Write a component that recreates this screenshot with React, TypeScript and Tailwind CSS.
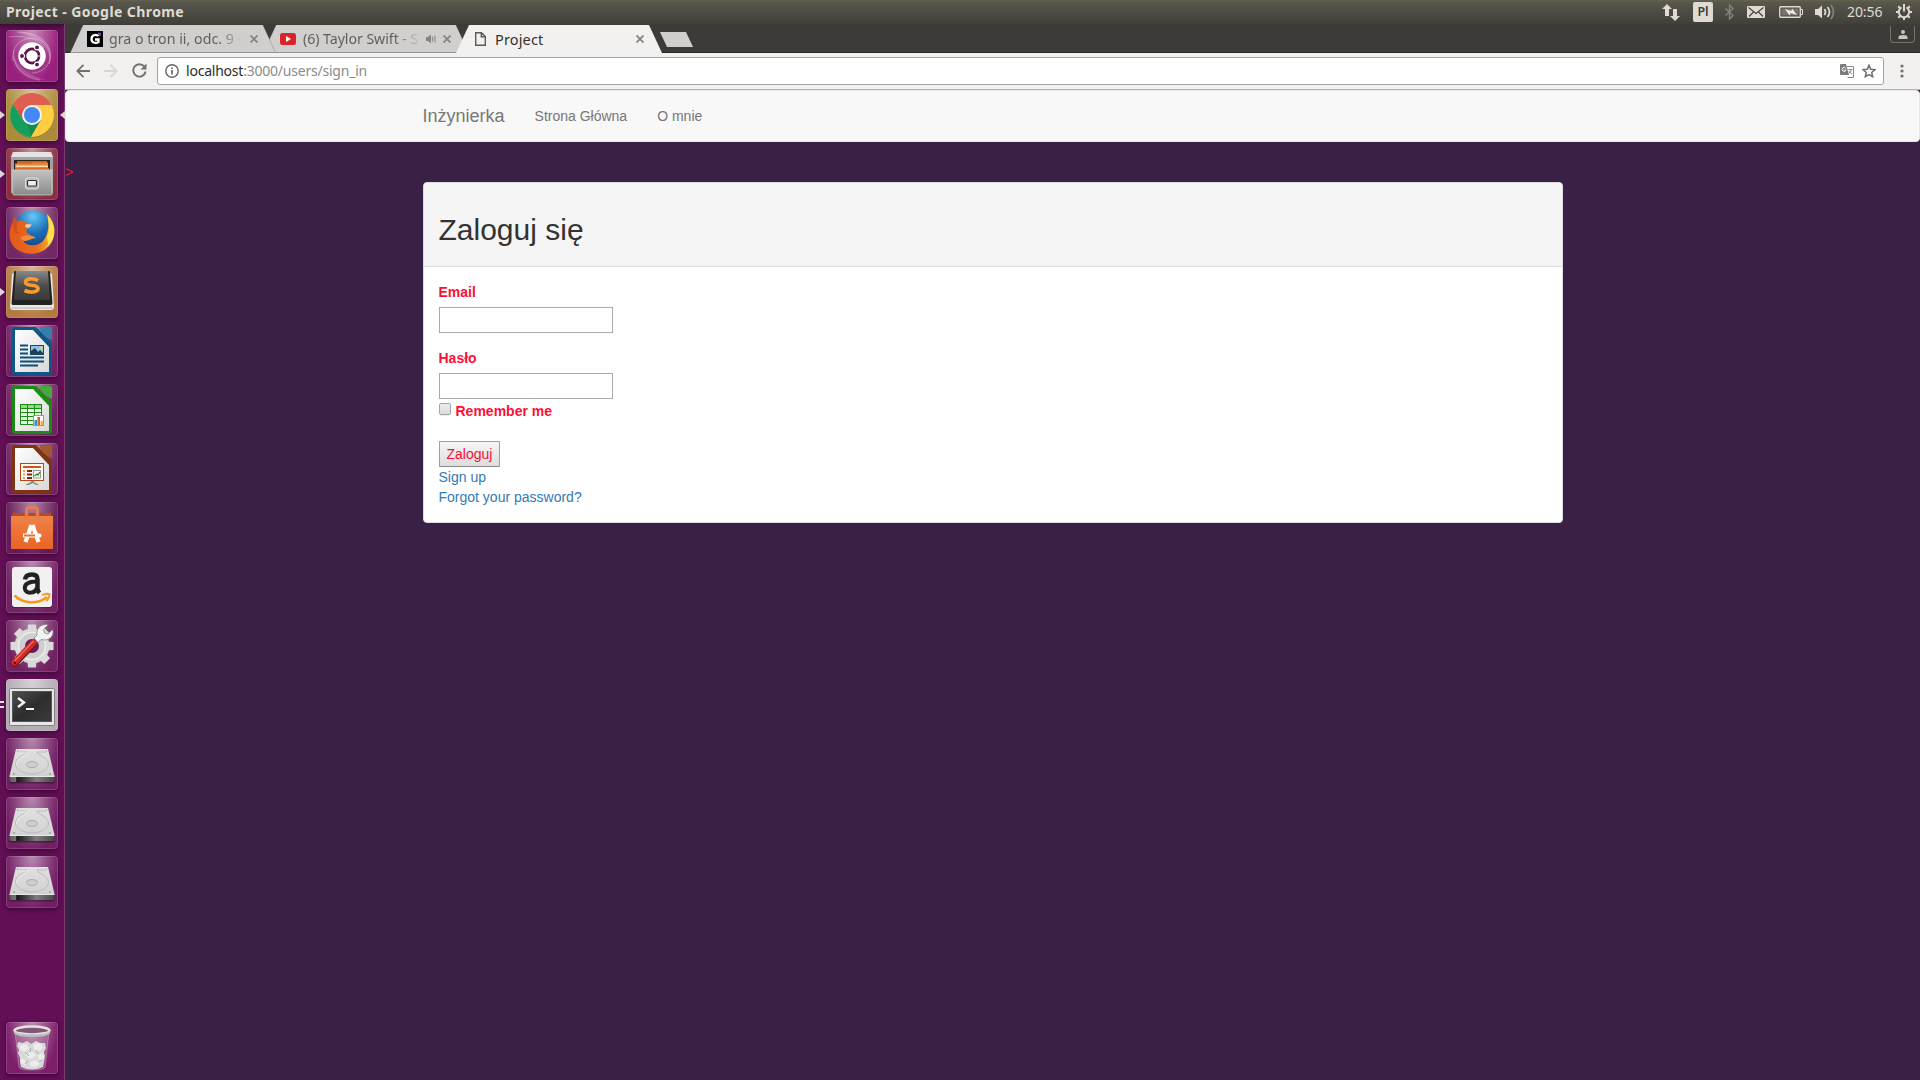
import React, { useId } from "react";

const UI = "font-['Noto_Sans',sans-serif]";

/* ---------- Launcher ---------- */

type TileProps = {
  base: string;
  children: React.ReactNode;
  running?: "one" | "two";
  focused?: boolean;
};

function Tile({ base, children, running, focused }: TileProps) {
  return (
    <div className="relative flex h-[52px] w-full shrink-0 items-center justify-center">
      {running === "one" && (
        <svg className="absolute left-0 top-[22px]" width="6" height="8" viewBox="0 0 6 8">
          <path d="M0 0L5 4L0 8Z" fill="#d9d5da" />
        </svg>
      )}
      {running === "two" && (
        <svg className="absolute left-0 top-[21px]" width="5" height="9" viewBox="0 0 5 9">
          <path d="M0 1h4v2H0zM0 6h4v2H0z" fill="#e6e2e6" />
        </svg>
      )}
      {focused && (
        <svg className="absolute -right-[0.5px] top-[22px]" width="6" height="8" viewBox="0 0 6 8">
          <path d="M6 0L1 4L6 8Z" fill="#d9d5da" />
        </svg>
      )}
      <div className={`h-[52px] w-[52px] overflow-hidden rounded-[4px] shadow-[0_2px_4px_rgba(20,0,25,0.45)] ${base}`}>
        <div className="h-full w-full rounded-[4px] bg-[radial-gradient(ellipse_at_50%_-5%,rgba(255,255,255,0.5)_0%,rgba(255,255,255,0.22)_40%,rgba(255,255,255,0)_75%)] shadow-[inset_0_0_0_1px_rgba(255,255,255,0.14)]">
          <svg width="52" height="52" viewBox="0 0 52 52">
            {children}
          </svg>
        </div>
      </div>
    </div>
  );
}

function UbuntuIcon() {
  return (
    <>
      <g fill="none" stroke="#fff" strokeOpacity=".3" strokeWidth="1">
        <path d="M7 31C5 13 19 6 31 9C43 12 46 25 43 34" />
        <path d="M11 2C33 2 47 13 44 29C42 38 34 43 26 43" />
        <path d="M8 20C6 36 17 48 34 50" />
        <path d="M3 7C17 5 35 9 38 18" />
      </g>
      <path d="M11 2C34 1 49 16 43 33C45 18 34 8 11 2Z" fill="#fff" fillOpacity=".18" />
      <path d="M7 24C6 39 20 50 40 50C24 46 12 38 7 24Z" fill="#fff" fillOpacity=".16" />
      <circle cx="26" cy="26.5" r="14" fill="#30002e" fillOpacity=".35" />
      <circle cx="26" cy="26" r="13.8" fill="#fff" />
      <circle cx="26" cy="26" r="7.1" fill="none" stroke="#5e1449" strokeWidth="2.600" />
      <g stroke="#fff" strokeWidth="1.100">
        <path d="M29.500 20L31.500 16.500M29.500 32L31.500 35.500M19 26H15" />
        <circle cx="16" cy="26" r="2.500" fill="#5e1449" />
        <circle cx="31" cy="17.400" r="2.500" fill="#5e1449" />
        <circle cx="31" cy="34.600" r="2.500" fill="#5e1449" />
      </g>
      <path d="M22 19L20.200 16M32 26H35" stroke="#fff" strokeWidth="0.800" />
    </>
  );
}

function ChromeIcon() {
  return (
    <>
      <circle cx="26" cy="26.800" r="22" fill="#4a3500" fillOpacity=".3" />
      <circle cx="26" cy="26" r="22" fill="#ffcd40" />
      <path d="M26 16H45.600A22 22 0 0 0 7 15L17.300 31Z" fill="#db4f43" />
      <path d="M26 16H45.600A22 22 0 0 0 34 5.500C20 3 12 8 7 15L12 22Z" fill="#e2685c" fillOpacity=".6" />
      <path d="M7 15A22 22 0 0 0 24.800 48L34.700 31L26 36L17.300 31Z" fill="#14a05c" />
      <path d="M24.800 48L34.700 31L26 36L20 34C22 38 25 42 24.800 48Z" fill="#0d7a44" fillOpacity=".5" />
      <circle cx="26" cy="26" r="10" fill="#f3f3f3" />
      <circle cx="26" cy="26" r="8" fill="#4688f1" />
    </>
  );
}

function FilesIcon() {
  const id = useId();
  return (
    <>
      <defs>
        <linearGradient id={id} x1="0" y1="0" x2="0" y2="1">
          <stop offset="0" stopColor="#c2c2c2" />
          <stop offset="1" stopColor="#8b8b8b" />
        </linearGradient>
      </defs>
      <path d="M7 4H45L47 9V45H5V9Z" fill="#a3a3a3" />
      <path d="M7 4H45L47 9H5Z" fill="#e3e3e3" />
      <path d="M8 12H44V24H8Z" fill="#2d2018" />
      <path d="M11 13H41V16H11Z" fill="#c9661d" />
      <path d="M9 15.500H25L26 14.500H42V24H9Z" fill="#e8833a" />
      <path d="M10 17.500H42V19H10Z" fill="#f8dcb8" />
      <path d="M9 20H43V24H9Z" fill="#dd6b22" />
      <path d="M6 22H46V46Q46 47 45 47H8Q7 47 7 46Z" fill={`url(#${id})`} stroke="#d4d4d4" strokeWidth=".7" />
      <rect x="19.500" y="30" width="13" height="11" rx="2" fill="#b6b6b6" stroke="#ddd" />
      <rect x="21.500" y="32.500" width="9" height="5.500" rx="1" fill="#eee" stroke="#333" strokeWidth="1.200" />
    </>
  );
}

function FirefoxIcon() {
  const a = useId();
  const b = useId();
  return (
    <>
      <defs>
        <radialGradient id={a} cx=".5" cy=".15" r=".9">
          <stop offset="0" stopColor="#65c8f4" />
          <stop offset=".45" stopColor="#1d6fb8" />
          <stop offset="1" stopColor="#152f6d" />
        </radialGradient>
        <linearGradient id={b} x1="0" y1="0" x2="1" y2="0">
          <stop offset="0" stopColor="#e25a1d" />
          <stop offset=".6" stopColor="#e96b1f" />
          <stop offset="1" stopColor="#fbc72f" />
        </linearGradient>
      </defs>
      <circle cx="27" cy="24" r="20.500" fill={`url(#${a})`} />
      <path d="M42 8C50 16 51 30 43 39C34 49 18 49 9 41C2 34 2 23 7 15L8 10L12 14C16 13 19 14 21 16L25 18C24 21 21 21 20 24C21 27 24 27 25 29C20 32 18 32 18 35C22 40 33 39 37 34C42 28 44 17 42 8Z" fill={`url(#${b})`} />
      <path d="M41 7C51 19 50 33 41 40C44 34 39 34 42 27C44 20 42 14 41 7Z" fill="#fde04a" />
      <path d="M8 10L12 14C10 20 10 24 13 27C8 27 6 20 8 10Z" fill="#c9431a" fillOpacity=".6" />
      <path d="M20 17L26 17.500L23 21L19 20Z" fill="#f5c9a0" />
      <path d="M14 31C19 27 26 28 30 31C25 31 24 34 18 34Z" fill="#f28a3a" />
    </>
  );
}

function SublimeIcon() {
  const id = useId();
  return (
    <>
      <defs>
        <linearGradient id={id} x1="0" y1="0" x2="0" y2="1">
          <stop offset="0" stopColor="#898989" />
          <stop offset=".5" stopColor="#4d4d4d" />
          <stop offset="1" stopColor="#383838" />
        </linearGradient>
      </defs>
      <path d="M6 9Q6 7 8 7H44Q46 7 46 9L48 41Q48 44 45 44H7Q4 44 4 41Z" fill="#e9e9e9" />
      <path d="M5 41H47V43H5Z" fill="#cdcdcd" />
      <path d="M8 6Q8 5 10 5H42Q44 5 44 6L46.500 37Q46.500 39 45 39H7Q5.500 39 5.500 37Z" fill="#222" />
      <path d="M10 5H42L44 33Q44 34 42 34H10Q8 34 8 33Z" fill={`url(#${id})`} />
      <path d="M32 14.500C27 11.500 19.500 12.500 19.500 16.500C19.500 21 32 17.500 32 22.500C32 26.500 24 27 18.500 24.500" fill="none" stroke="#f79a31" strokeWidth="3.600" />
    </>
  );
}

function DocShape({ edge, fold }: { edge: string; fold: string }) {
  const id = useId();
  return (
    <>
      <defs>
        <linearGradient id={id} x1="0" y1="0" x2="1" y2="1">
          <stop offset="0" stopColor="#fff" />
          <stop offset="1" stopColor="#d8d8d8" />
        </linearGradient>
      </defs>
      <path d="M8 2H30L46 18V47Q46 50 43 50H9Q6 50 6 47V5Q6 2 8 2Z" fill={edge} />
      <path d="M9 5H27L43 22V47H9Z" fill={`url(#${id})`} />
      <path d="M33.500 2H44Q46 2 46 4V14.500Q36 12 33.500 2Z" fill={fold} />
    </>
  );
}

function WriterIcon() {
  return (
    <>
      <DocShape edge="#0c5688" fold="#357fab" />
      <path d="M14 20.500h8M14 24.500h8M14 28.500h8M14 32.500h24M14 36.500h24M14 40.500h18" stroke="#0e4f7d" strokeWidth="2" />
      <rect x="24.500" y="20.500" width="13" height="9" fill="#8ac4ea" stroke="#17476b" />
      <path d="M25 29V26L29 23L32 27L34 25L37 28V29Z" fill="#253d49" />
      <circle cx="35.500" cy="23" r="1.500" fill="#f2cf52" />
    </>
  );
}

function CalcIcon() {
  return (
    <>
      <DocShape edge="#1a8a12" fold="#46a93c" />
      <rect x="14.500" y="20.500" width="21" height="20" fill="#e9f9e6" stroke="#1b8a12" />
      <path d="M15 21h20v3H15z" fill="#8fdc85" />
      <path d="M14 24.500h22M14 28.500h22M14 32.500h22M14 36.500h22M21.500 20v20M28.500 20v20" stroke="#1b8a12" />
      <rect x="27.500" y="31.500" width="10" height="10" fill="#fff" stroke="#999" />
      <path d="M28.500 36h2.500v5h-2.500z" fill="#2b8fd0" />
      <path d="M31.500 33h2.500v8h-2.500z" fill="#d8611d" />
      <path d="M34.500 37h2.500v4h-2.500z" fill="#efb52b" />
    </>
  );
}

function ImpressIcon() {
  return (
    <>
      <DocShape edge="#7e3412" fold="#a4572f" />
      <rect x="14.500" y="20.500" width="23" height="17" fill="#fff8f3" stroke="#b5490f" />
      <path d="M17 24h18" stroke="#c85a19" strokeWidth="2" />
      <path d="M17 28h2M17 31.500h2M17 35h2" stroke="#e89a6a" strokeWidth="2" />
      <path d="M21 28h5M21 31.500h5M21 35h5" stroke="#7a2d0a" strokeWidth="2" />
      <rect x="27.500" y="27.500" width="7" height="7.500" fill="#eefaea" stroke="#999" />
      <path d="M28.500 33L31 31L32 32L34 29" fill="none" stroke="#1f8a1a" strokeWidth="1.200" />
      <path d="M25 38h3v1l5 3h-3l-3-2l-4 2h-4l6-3z" fill="#888" />
    </>
  );
}

function SoftwareIcon() {
  const id = useId();
  return (
    <>
      <defs>
        <linearGradient id={id} x1="0" y1="0" x2="0" y2="1">
          <stop offset="0" stopColor="#ee8347" />
          <stop offset="1" stopColor="#ea6324" />
        </linearGradient>
      </defs>
      <path d="M7 10L10 11H43L45 10V16H6Z" fill="#b94a22" />
      <path d="M5 14H47V47H5Z" fill={`url(#${id})`} />
      <path d="M20.500 17.500V9Q20.500 5.500 24 5.500H28Q31.500 5.500 31.500 9V17.500" fill="none" stroke="#e87b50" strokeWidth="3.200" />
      <path d="M25.500 23L19.500 40M26.500 23L32.500 40" stroke="#fff" strokeWidth="4.200" />
      <path d="M17 31.500H33.500Q35.500 31.500 35.500 33.500Q35.500 35.500 33.500 35.500H17Z" fill="#fff" />
      <path d="M18 33.500H29" stroke="#e9702f" strokeWidth="2" />
    </>
  );
}

function AmazonIcon() {
  return (
    <>
      <rect x="6" y="7" width="40" height="40" rx="3" fill="#3a0830" fillOpacity=".35" />
      <rect x="6" y="6" width="40" height="40" rx="3" fill="#f1f1f1" />
      <path d="M19 18.500C19.500 14.500 22.500 13.500 26 13.500C30 13.500 31.500 15.500 31.500 18.500V27.500C31.500 29.500 32 30.500 33.500 32" fill="none" stroke="#222" strokeWidth="4.500" />
      <path d="M31 20.500C24 20.500 18.800 22 18.800 27C18.800 33.500 29.500 33 31 26.500" fill="none" stroke="#222" strokeWidth="4" />
      <path d="M8.500 34.500C18 43.500 33 43 41 36" fill="none" stroke="#f8981d" strokeWidth="2.600" />
      <path d="M36 34C40 32.500 42 32.500 43.500 33C43.500 36 42.500 38 40.500 40" fill="none" stroke="#f8981d" strokeWidth="1.800" />
    </>
  );
}

function SettingsIcon() {
  return (
    <>
      <g fill="#dadada">
        {[0, 45, 90, 135].map((a) => (
          <path key={a} d="M22 4.500H30L31.500 26L30 47.500H22L20.500 26Z" transform={`rotate(${a} 26 26)`} />
        ))}
        <circle cx="26" cy="26" r="17.500" />
      </g>
      <circle cx="26" cy="26" r="13.500" fill="#cecece" stroke="#ececec" strokeWidth="1.500" />
      <circle cx="26" cy="26" r="7" fill="#6b1b5e" />
      <path d="M8.500 43.500L28 23" stroke="#7e1215" strokeWidth="7" strokeLinecap="round" />
      <path d="M8.500 42.500L28 22" stroke="#cf2b2b" strokeWidth="6" strokeLinecap="round" />
      <path d="M9 40.500L27 21.500" stroke="#ea6b62" strokeWidth="1.400" strokeLinecap="round" />
      <path d="M28 18L31 15C30 9 34 4.500 40 4.500L42 5L37.500 9.500L38.500 13L42 14L46.500 9.500C48.500 15 44.500 20 38 20L35 19.500L32 22.500Z" fill="#f3f3f3" stroke="#858585" strokeWidth=".8" />
      <circle cx="9" cy="43" r="1.300" fill="#5c0c10" />
    </>
  );
}

function TerminalIcon() {
  const id = useId();
  return (
    <>
      <defs>
        <linearGradient id={id} x1="0" y1="0" x2="1" y2="1">
          <stop offset="0" stopColor="#505050" />
          <stop offset=".5" stopColor="#2d2d2d" />
          <stop offset="1" stopColor="#3b3b3b" />
        </linearGradient>
      </defs>
      <rect x="3.500" y="9.500" width="45" height="37" rx="1" fill="#e7e7e7" stroke="#818181" />
      <rect x="6.500" y="12.500" width="39" height="30" fill={`url(#${id})`} stroke="#555" />
      <path d="M12 19L18 23.500L12 28" fill="none" stroke="#f5f5f5" strokeWidth="2.400" />
      <path d="M20 30H28" stroke="#f5f5f5" strokeWidth="2" />
    </>
  );
}

function DiskIcon() {
  const a = useId();
  const b = useId();
  return (
    <>
      <defs>
        <linearGradient id={a} x1="0" y1="0" x2="0" y2="1">
          <stop offset="0" stopColor="#e0e0e0" />
          <stop offset="1" stopColor="#d2d2d2" />
        </linearGradient>
        <linearGradient id={b} x1="0" y1="0" x2="1" y2="0">
          <stop offset="0" stopColor="#5d5d5d" />
          <stop offset=".14" stopColor="#737373" />
          <stop offset=".16" stopColor="#151515" />
          <stop offset=".6" stopColor="#7d7d7d" />
          <stop offset="1" stopColor="#454545" />
        </linearGradient>
      </defs>
      <path d="M3 38H49V44L48 45.500H4L3 44Z" fill="#2e0828" fillOpacity=".5" />
      <path d="M10 11H42L48.500 38H3.500Z" fill={`url(#${a})`} />
      <path d="M3.500 38.500H48.500V43L47.500 44H4.500L3.500 43Z" fill={`url(#${b})`} />
      <path d="M3.500 38.500H48.500" stroke="#e9e9e9" />
      <path d="M12 14H21C20 17 10 18 9.500 26C9.500 32 18 36 26 36C34 36 42.500 32 42.500 26C42 19 32 18 31 14H40" fill="none" stroke="#bcbcbc" strokeWidth="1" />
      <path d="M12 15H22C20 18 11 19 10.500 27" fill="none" stroke="#f2f2f2" strokeWidth=".8" />
      <ellipse cx="26" cy="26.500" rx="5.500" ry="3" fill="#cecece" stroke="#adadad" />
      <path d="M7 36h2M43 36h2M11 13h1M40 13h1" stroke="#888" />
    </>
  );
}

function TrashIcon() {
  return (
    <>
      <path d="M9 10L13 45Q13 48 26 48Q39 48 39 45L43 10Z" fill="#fff" fillOpacity=".16" stroke="#fff" strokeOpacity=".25" />
      <path d="M12 20l5 1l4-2l4 3l5-3l4 2l5 0l1 5l-2 4l1 4l-1 6l-1 5q-11 5-22 0l-1-5l0-4l-2-5l1-3l-2-4z" fill="#d9d9d9" />
      <path d="M14 23l6-1l3 4l-4 4l-5-2zM27 22l7-1l3 4l-3 4l-6-2zM20 32l6-3l4 4l-4 4l-5-1zM31 33l5-2l2 5l-4 3zM15 36l4 2l1 5l-5-1zM24 40l6-2l4 4l-5 3l-5-1z" fill="#ececec" />
      <path d="M19 30l4 4M30 29l3 3M22 39l-3 3M33 40l3-2M25 26l-1 4" stroke="#aaa" />
      <ellipse cx="26" cy="8.500" rx="17.500" ry="4" fill="#7d5678" stroke="#e2e2de" strokeWidth="2.500" />
      <path d="M8 9V11.500Q11 15 26 15Q41 15 44 11.500V9Q41 12.500 26 12.500Q11 12.500 8 9Z" fill="#bdbdb9" />
    </>
  );
}

function Launcher() {
  return (
    <aside className="flex w-[65px] shrink-0 flex-col gap-[7px] border-r border-[#7b3a71] bg-[#620f55] bg-[linear-gradient(to_bottom,#3d0a35_0px,#620f55_6px)] pt-[6px]">
      <Tile base="bg-[#981f7c]"><UbuntuIcon /></Tile>
      <Tile base="bg-[#ad8b3c]" running="one" focused><ChromeIcon /></Tile>
      <Tile base="bg-[#8b2e40]" running="one"><FilesIcon /></Tile>
      <Tile base="bg-[#732865]"><FirefoxIcon /></Tile>
      <Tile base="bg-[#b47a42]" running="one"><SublimeIcon /></Tile>
      <Tile base="bg-[#712262]"><WriterIcon /></Tile>
      <Tile base="bg-[#712262]"><CalcIcon /></Tile>
      <Tile base="bg-[#712262]"><ImpressIcon /></Tile>
      <Tile base="bg-[#661a57]"><SoftwareIcon /></Tile>
      <Tile base="bg-[#712262]"><AmazonIcon /></Tile>
      <Tile base="bg-[#712262]"><SettingsIcon /></Tile>
      <Tile base="bg-[#b3aab3]" running="two"><TerminalIcon /></Tile>
      <Tile base="bg-[#721e63]"><DiskIcon /></Tile>
      <Tile base="bg-[#721e63]"><DiskIcon /></Tile>
      <Tile base="bg-[#721e63]"><DiskIcon /></Tile>
      <div className="mt-auto pb-[6px]">
        <Tile base="bg-[#7c1e6a]"><TrashIcon /></Tile>
      </div>
    </aside>
  );
}

/* ---------- System bar ---------- */

function SystemBar() {
  return (
    <header className={`flex h-6 shrink-0 items-center justify-between bg-[linear-gradient(to_bottom,#66624f_0px,#59574d_2px,#403f3a_24px)] pl-[6px] pr-2 text-[#dfdbd2] ${UI}`}>
      <span className="whitespace-nowrap text-[14px] leading-6 font-bold tracking-[0.42px]">Project - Google Chrome</span>
      <div className="flex h-6 items-center">
        <svg width="18" height="18" viewBox="0 0 18 18" className="mr-[13px]" fill="#dfdbd2">
          <path d="M5 1L10 6H7V13H3V6H0ZM13 18L8 13H11V6H15V13H18Z" />
        </svg>
        <span className="mr-3 flex h-5 w-5 items-center justify-center rounded-[2px] bg-[#dfdbd2] text-[12.500px] leading-5 font-semibold text-[#3c3b37]">Pl</span>
        <svg width="9" height="16" viewBox="0 0 9 16" className="mr-[13px]" fill="none" stroke="#84827a" strokeWidth="1.400">
          <path d="M0.500 4.500L8 11.500L4.500 15V1L8 4.500L0.500 11.500" />
        </svg>
        <svg width="18" height="12" viewBox="0 0 18 12" className="mr-[14px]">
          <rect width="18" height="12" rx="1" fill="#dfdbd2" />
          <path d="M1.500 1.500L9 7.500L16.500 1.500M2 10.500L6.500 6M16 10.500L11.500 6" fill="none" stroke="#45443f" strokeWidth="1.200" />
        </svg>
        <svg width="24" height="12" viewBox="0 0 24 12" className="mr-3">
          <rect x=".75" y=".75" width="20.500" height="10.500" rx="1" fill="none" stroke="#dfdbd2" strokeWidth="1.400" />
          <path d="M22 3.500h1.500v5H22" fill="none" stroke="#dfdbd2" />
          <path d="M2.500 2.500h17v7h-17z" fill="#77756d" />
          <path d="M6 3L12.500 5L13 2.500L18 9L11.500 7L10.500 9.500Z" fill="#f0ede5" />
        </svg>
        <svg width="20" height="16" viewBox="0 0 20 16" className="mr-3" fill="none" strokeWidth="1.700">
          <path d="M0 5H3L7 1.500V14.500L3 11H0Z" fill="#dfdbd2" />
          <path d="M9.500 5Q11.500 8 9.500 11" stroke="#dfdbd2" />
          <path d="M12.500 3Q16.500 8 12.500 13" stroke="#dfdbd2" />
          <path d="M16 1Q21 8 16 15" stroke="#84827a" />
        </svg>
        <span className="mr-3 w-[37px] whitespace-nowrap text-[14px] leading-6 tracking-[-0.1px]">20:56</span>
        <svg width="16" height="16" viewBox="0 0 16 16" fill="none" stroke="#dfdbd2">
          <path d="M5.500 3.400A5.200 5.200 0 1 0 10.500 3.400" strokeWidth="2" />
          <path d="M8 0V7.500" strokeWidth="2" />
          <path d="M0 8H2.500M13.500 8H16M2.300 2.300L4 4M12 4L13.700 2.300M2.300 13.700L4 12M12 12L13.700 13.700M8 13.500V16" strokeWidth="2" />
        </svg>
      </div>
    </header>
  );
}

/* ---------- Browser chrome ---------- */

function CloseX() {
  return (
    <svg width="8" height="8" viewBox="0 0 8 8" className="shrink-0" stroke="#858483" strokeWidth="1.800">
      <path d="M.5 .5L7.500 7.500M7.500 .5L.5 7.500" />
    </svg>
  );
}

function Tab({ active, z, children }: { active?: boolean; z: string; children: React.ReactNode }) {
  return (
    <div className={`relative h-7 w-[207px] shrink-0 -mr-[14px] [clip-path:polygon(0_100%,13px_0,193px_0,206px_100%)] ${z} ${active ? "bg-[#f2f1f0] pb-0" : "bg-[#999795] pb-px"} px-px`}>
      <div className={`flex h-full items-center pl-4 pr-[18px] [clip-path:polygon(0_100%,12.5px_0,191.500px_0,204px_100%)] ${active ? "bg-[#f2f1f0]" : "bg-[#d0cfcd]"}`}>
        {children}
      </div>
    </div>
  );
}

function TabStrip() {
  return (
    <div className={`flex h-[29px] shrink-0 items-start border-b border-[#2a2826] bg-[#3c3b37] pt-px leading-7 ${UI}`}>
      <div className="-mb-px flex flex-1 pl-[5px]">
        <Tab z="z-10">
          <svg width="16" height="16" viewBox="0 0 16 16" className="mr-[6px] shrink-0">
            <rect width="16" height="16" fill="#000" />
            <path d="M11.500 5C9.500 3 4.500 3.500 4.500 8C4.500 12.500 10 12.500 11.500 11V8.500H8" fill="none" stroke="#fff" strokeWidth="2.300" />
            <path d="M11 2.500H13V5" fill="none" stroke="#9b3df0" strokeWidth="1.500" />
          </svg>
          <span className="w-[134px] whitespace-nowrap bg-[linear-gradient(to_right,#5d5c5b_0px,#5d5c5b_110px,transparent_134px)] bg-clip-text text-[14.200px] tracking-[0.02px] text-transparent">gra o tron ii, odc. 9 -</span>
          <span className="ml-[7px] flex"><CloseX /></span>
        </Tab>
        <Tab z="z-0">
          <svg width="16" height="12" viewBox="0 0 16 12" className="mr-[7px] shrink-0">
            <rect width="16" height="12" rx="2.500" fill="#d9252a" />
            <path d="M6 3L11 6L6 9Z" fill="#fff" />
          </svg>
          <span className="w-[118px] whitespace-nowrap bg-[linear-gradient(to_right,#5d5c5b_0px,#5d5c5b_92px,transparent_118px)] bg-clip-text text-[14.200px] tracking-[-0.06px] text-transparent">(6) Taylor Swift - S</span>
          <svg width="10" height="10" viewBox="0 0 10 10" className="ml-[5px] mr-[7px] shrink-0" fill="#858483">
            <path d="M0 3H2L5 .5V9.500L2 7H0ZM6.200 2.500H7.200V7.500H6.200ZM8.500 1.500H9.500V8.500H8.500Z" />
          </svg>
          <CloseX />
        </Tab>
        <Tab z="z-20" active>
          <svg width="11" height="14" viewBox="0 0 11 14" className="ml-[2px] mr-[9px] shrink-0" fill="none" stroke="#5a5a5a" strokeWidth="1.400">
            <path d="M.7 .7H6.500L10.300 4.500V13.300H.7ZM6.300 .7V4.700H10.300" />
          </svg>
          <span className="flex-1 text-[14.500px] tracking-[0.15px] text-[#33322f]">Project</span>
          <CloseX />
        </Tab>
        <div className="ml-[11px] mt-[7px] h-[15px] w-[33px] bg-[#d0cfcd] [clip-path:polygon(0_0,26px_0,100%_100%,7px_100%)]" />
      </div>
      <div className="mr-[5px] mt-px flex h-[17px] w-[25px] items-center justify-center rounded-b-[4px] border border-t-0 border-[#74736e]">
        <svg width="10" height="9" viewBox="0 0 10 9" fill="#c6c5c1">
          <circle cx="5" cy="2" r="2" />
          <path d="M.5 9V7Q.5 5 5 5Q9.500 5 9.500 7V9Z" />
        </svg>
      </div>
    </div>
  );
}

function Toolbar() {
  return (
    <div className="flex h-[37px] shrink-0 items-center border-b border-[#b3b1b0] bg-[#f2f1f0] pb-px pl-[11px] pr-4">
      <svg width="14" height="14" viewBox="0 0 14 14" className="mr-[14px]" fill="none" stroke="#73716f" strokeWidth="1.800">
        <path d="M14 7H1.500M7.500 .8L1.300 7L7.500 13.200" />
      </svg>
      <svg width="14" height="14" viewBox="0 0 14 14" className="mr-[14px]" fill="none" stroke="#d6d5d3" strokeWidth="1.800">
        <path d="M0 7H12.500M6.500 .8L12.700 7L6.500 13.200" />
      </svg>
      <svg width="15" height="15" viewBox="0 0 15 15" className="mr-[10px]" fill="none" stroke="#73716f" strokeWidth="1.900">
        <path d="M12.300 3.500A6.200 6.200 0 1 0 13.600 8.500" />
        <path d="M14.500 .5V6.500H8.500Z" fill="#73716f" stroke="none" />
      </svg>
      <div className="flex h-7 flex-1 items-center rounded-[3px] border border-[#a4a2a0] bg-white pl-[7px] pr-[7px]">
        <svg width="14" height="14" viewBox="0 0 14 14" className="mr-[7px]" fill="none" stroke="#666" strokeWidth="1.400">
          <circle cx="7" cy="7" r="6.200" />
          <path d="M7 6V10.500M7 3.400V5" strokeWidth="1.700" />
        </svg>
        <span className={`flex-1 whitespace-nowrap text-[14px] leading-[26px] tracking-[-0.22px] text-[#8b8b8b] ${UI}`}>
          <span className="text-[#2b2b2b]">localhost</span>:3000/users/sign_in
        </span>
        <svg width="14" height="14" viewBox="0 0 14 14" className="mr-2">
          <path d="M7 2.500H13.500V13.500H7.500" fill="#fff" stroke="#8a8a8a" />
          <path d="M0 1Q0 0 1 0H6L9 11H1Q0 11 0 10Z" fill="#7b7b7b" />
          <path d="M5.800 4.300A2 2 0 1 0 6 6H4.300" fill="none" stroke="#fff" />
          <path d="M8.500 5.500H12.500M11.500 5.500Q11 8 8.500 9.500M9 7Q10.500 9.500 12 10" fill="none" stroke="#8a8a8a" />
        </svg>
        <svg width="14" height="14" viewBox="0 0 14 14" fill="none" stroke="#6e6e6e" strokeWidth="1.500">
          <path d="M7 1.200L8.700 5.200L13 5.600L9.700 8.500L10.700 12.700L7 10.500L3.300 12.700L4.300 8.500L1 5.600L5.300 5.200Z" />
        </svg>
      </div>
      <svg width="4" height="14" viewBox="0 0 4 14" className="ml-4" fill="#73716f">
        <circle cx="2" cy="2" r="1.600" />
        <circle cx="2" cy="7" r="1.600" />
        <circle cx="2" cy="12" r="1.600" />
      </svg>
    </div>
  );
}

/* ---------- Page ---------- */

function Page() {
  return (
    <main className="flex-1 bg-[#382144] font-['Liberation_Sans',Arial,sans-serif] text-[14px] leading-5 text-[#fd0e35]">
      <nav className="mb-5 h-[52px] rounded-[4px] border border-[#e7e7e7] bg-[#f8f8f8]">
        <div className="mx-auto flex h-[50px] w-[1140px] items-center text-[#777]">
          <a className="mr-[15px] text-[18px] leading-5">Inżynierka</a>
          <a className="px-[15px]">Strona Główna</a>
          <a className="px-[15px]">O mnie</a>
        </div>
      </nav>
      &gt;
      <section className="mx-auto w-[1140px] overflow-hidden rounded-[4px] border border-[#ddd] bg-white">
        <div className="border-b border-[#ddd] bg-[#f5f5f5] px-[15px] pb-5 pt-[30px]">
          <h2 className="text-[30px] leading-[33px] text-[#333]">Zaloguj się</h2>
        </div>
        <form className="flex flex-col items-start p-[15px]">
          <label className="mb-[5px] font-bold">Email</label>
          <input className="mb-[15px] h-[26px] w-[174px] border border-[#a9a9a9] bg-white" />
          <label className="mb-[5px] font-bold">Hasło</label>
          <input type="password" className="h-[26px] w-[174px] border border-[#a9a9a9] bg-white" />
          <div className="mb-[20px] flex h-[22px] items-start">
            <span className="mr-[5px] mt-1 h-3 w-3 rounded-[2px] border border-[#a5a5a5] bg-[linear-gradient(to_bottom,#ededed,#dcdcdc)] shadow-[0_1px_0_#eee]" />
            <label className="mt-[2px] font-bold">Remember me</label>
          </div>
          <button type="button" className="h-[26px] w-[61px] rounded-[1px] border border-[#a0a0a0] border-b-[#8a8a8a] bg-[linear-gradient(to_bottom,#f6f6f6,#dddddd)] pl-px leading-5">Zaloguj</button>
          <a className="text-[#337ab7]">Sign up</a>
          <a className="text-[#337ab7]">Forgot your password?</a>
        </form>
      </section>
    </main>
  );
}

export default function App() {
  return (
    <div className="flex h-[1080px] w-[1920px] flex-col overflow-hidden">
      <SystemBar />
      <div className="flex min-h-0 flex-1">
        <Launcher />
        <div className="flex min-w-0 flex-1 flex-col">
          <TabStrip />
          <Toolbar />
          <Page />
        </div>
      </div>
    </div>
  );
}
